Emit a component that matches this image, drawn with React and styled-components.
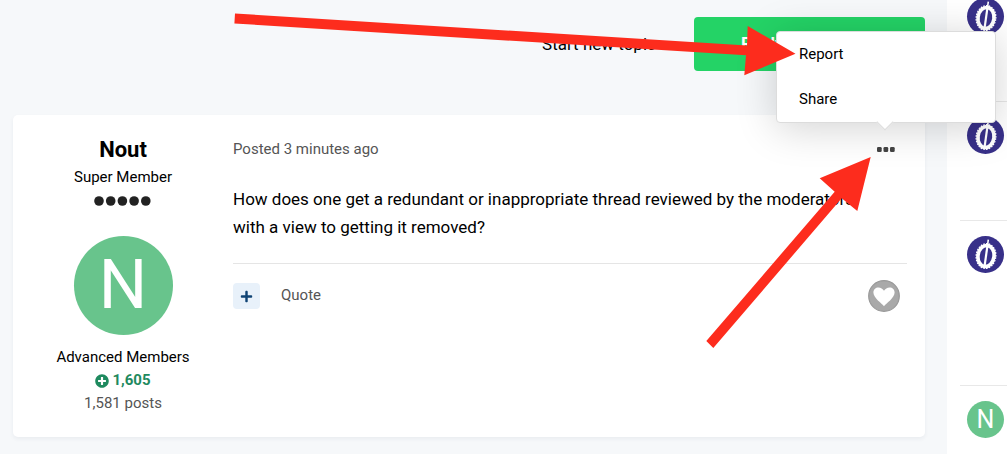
import React from "react"
import styled, { createGlobalStyle } from "styled-components"
import { FaPlus, FaPlusCircle } from "react-icons/fa"

const GlobalStyle = createGlobalStyle`
  * {
    box-sizing: border-box;
  }
  body {
    margin: 0;
    background-color: #f6f8fa;
    color: #000;
    font-family: Roboto, "Liberation Sans", sans-serif;
    font-size: 15px;
    line-height: 23px;
  }
  a {
    color: inherit;
    text-decoration: none;
  }
  button {
    border: 0;
    padding: 0;
    background: none;
    color: inherit;
    font: inherit;
    cursor: pointer;
  }
`

const topics = [
  { id: 1, height: 119 },
  { id: 2, height: 119 },
  { id: 3, height: 165 },
  { id: 4, height: 119, letter: "N" },
]

const Durian = () => (
  <svg width="37" height="37" viewBox="0 0 37 37" aria-hidden="true">
    <g transform="rotate(8 19 20)" fill="none" stroke="#fff">
      <ellipse cx="19" cy="20" rx="8" ry="10.6" strokeWidth="3.6" />
      <ellipse
        cx="19"
        cy="20"
        rx="9.8"
        ry="12.4"
        strokeWidth="1.3"
        strokeDasharray="1.6 1.2"
      />
      <path d="M19 10V30" strokeWidth="2.2" />
      <path d="M19 8V3.4" strokeWidth="1.6" />
    </g>
  </svg>
)

const Rank = () => (
  <svg width="58" height="10" viewBox="0 0 58 10" aria-hidden="true">
    {[5, 16.7, 28.4, 40.1, 51.8].map(x => (
      <circle key={x} cx={x} cy="5" r="4.8" fill="#222" />
    ))}
  </svg>
)

const Dots = () => (
  <svg width="18" height="5" viewBox="0 0 18 5" aria-hidden="true">
    {[0, 6.5, 13].map(x => (
      <rect key={x} x={x} width="4.7" height="5" rx="1.3" fill="#444" />
    ))}
  </svg>
)

const Heart = () => (
  <svg width="32" height="32" viewBox="0 0 32 32" aria-hidden="true">
    <circle cx="16" cy="16" r="15.3" fill="#a9a9a9" stroke="#999" strokeWidth="1.2" />
    <path
      d="M16 26.2C14 23.5 5.4 18.2 5.4 12.6C5.4 9.6 7.7 7.6 10.4 7.6C12.8 7.6 14.8 8.9 16 10.8C17.2 8.9 19.2 7.6 21.6 7.6C24.4 7.6 26.6 9.6 26.6 12.6C26.6 18.2 18 23.5 16 26.2Z"
      fill="#fff"
    />
  </svg>
)

const App = () => {
  return (
    <Page>
      <GlobalStyle />
      <Main>
        <Actions>
          <a href="#new">Start new topic</a>
          <ReplyButton>Reply to this topic</ReplyButton>
        </Actions>
        <Post>
          <Author>
            <AuthorName>Nout</AuthorName>
            <span>Super Member</span>
            <RankRow>
              <Rank />
            </RankRow>
            <Avatar $size={99} $fontSize={68}>
              N
            </Avatar>
            <Group>Advanced Members</Group>
            <Reputation>
              <FaPlusCircle size={14} /> 1,605
            </Reputation>
            <Muted>1,581 posts</Muted>
          </Author>
          <Content>
            <PostHeader>
              <Muted>Posted 3 minutes ago</Muted>
              <MenuAnchor>
                <MoreButton aria-label="More options">
                  <Dots />
                </MoreButton>
                <Menu>
                  <a href="#report">Report</a>
                  <a href="#share">Share</a>
                </Menu>
              </MenuAnchor>
            </PostHeader>
            <Message>
              How does one get a redundant or inappropriate thread reviewed by
              the moderators with a view to getting it removed?
            </Message>
            <PostFooter>
              <MultiQuote aria-label="Multiquote">
                <FaPlus size={13} />
              </MultiQuote>
              <QuoteButton>Quote</QuoteButton>
              <LikeButton aria-label="Like">
                <Heart />
              </LikeButton>
            </PostFooter>
          </Content>
        </Post>
      </Main>
      <Sidebar>
        {topics.map(topic => (
          <Topic key={topic.id} $height={topic.height}>
            <Avatar $size={37} $fontSize={25} $logo={!topic.letter}>
              {topic.letter || <Durian />}
            </Avatar>
          </Topic>
        ))}
      </Sidebar>
      <Arrows viewBox="0 0 1007 454" aria-hidden="true">
        <path d="M235 13.5L747 45.5L747.7 26L795.5 53.7L744.3 75.3L746 55.3L234.4 23.5Z" />
        <path d="M870.7 157L857.3 211L841.7 198.3L713.3 348L706.3 341L834.7 191.7L819.7 178.3Z" />
      </Arrows>
    </Page>
  )
}

const Page = styled.div`
  position: relative;
  display: flex;
  height: 100vh;
  overflow: hidden;
`

const Main = styled.main`
  flex: 1;
  padding: 17px 22px 17px 13px;
`

const Actions = styled.div`
  display: flex;
  justify-content: flex-end;
  align-items: center;
  gap: 38px;
  margin-bottom: 44px;
  font-size: 17px;
`

const ReplyButton = styled.button`
  padding: 15px 47px 16px;
  border-radius: 4px;
  background-color: #24d366;
  color: #fff;
  font-weight: 700;
`

const Post = styled.article`
  display: flex;
  border-radius: 5px;
  background-color: #fff;
  box-shadow: 0 2px 4px rgba(30, 50, 80, 0.06);
`

const Author = styled.aside`
  display: flex;
  flex-direction: column;
  align-items: center;
  width: 220px;
  padding: 21px 0 22px;
`

const AuthorName = styled.h3`
  margin: 0 0 2px;
  font-size: 22px;
  line-height: 28px;
  font-weight: 700;
`

const RankRow = styled.div`
  display: flex;
  margin: 7px 0 30px;
`

const Avatar = styled.div`
  display: flex;
  flex-shrink: 0;
  justify-content: center;
  align-items: center;
  width: ${props => props.$size}px;
  height: ${props => props.$size}px;
  border-radius: 50%;
  background-color: ${props => (props.$logo ? "#383089" : "#68c48c")};
  color: #fff;
  font-size: ${props => props.$fontSize}px;
`

const Group = styled.span`
  margin-top: 11px;
`

const Reputation = styled.span`
  display: flex;
  align-items: center;
  gap: 3px;
  color: #1f8a5f;
  font-weight: 700;
`

const Muted = styled.span`
  color: #555;
`

const Content = styled.div`
  flex: 1;
  padding: 23px 18px 0 0;
`

const PostHeader = styled.header`
  display: flex;
  justify-content: space-between;
`

const MenuAnchor = styled.div`
  position: relative;
  display: flex;
  margin-right: 12px;
`

const MoreButton = styled.button`
  display: flex;
  align-items: center;
`

const Menu = styled.nav`
  position: absolute;
  right: -101px;
  bottom: 38px;
  display: flex;
  flex-direction: column;
  width: 220px;
  border: 1px solid #dcdcdc;
  border-radius: 4px;
  background-color: #fff;
  box-shadow: 0 5px 40px rgba(0, 0, 0, 0.18);

  a {
    padding: 11px 22px;
  }

  &::after {
    content: "";
    position: absolute;
    right: 104px;
    bottom: -6px;
    width: 11px;
    height: 11px;
    border: solid #dcdcdc;
    border-width: 0 1px 1px 0;
    background-color: #fff;
    transform: rotate(45deg);
  }
`

const Message = styled.p`
  margin: 24px 0 22px;
  padding-right: 20px;
  font-size: 17px;
  line-height: 28px;
`

const PostFooter = styled.footer`
  display: flex;
  align-items: center;
  padding: 16px 7px 0 0;
  border-top: 1px solid #e5e5e5;
`

const MultiQuote = styled.button`
  display: flex;
  justify-content: center;
  align-items: center;
  width: 27px;
  height: 26px;
  border-radius: 4px;
  background-color: #e8f1fa;
  color: #0f4374;
`

const QuoteButton = styled.button`
  margin-left: 21px;
  padding-bottom: 2px;
  color: #555;
`

const LikeButton = styled.button`
  display: flex;
  margin-left: auto;
`

const Sidebar = styled.aside`
  width: 60px;
  padding-left: 13px;
  margin-top: -18px;
  background-color: #fff;
`

const Topic = styled.div`
  height: ${props => props.$height}px;
  padding: 15px 7px;
  border-top: 1px solid #e8e8e8;
`

const Arrows = styled.svg`
  position: absolute;
  top: 0;
  left: 0;
  width: 100%;
  fill: #fd2c1d;
  pointer-events: none;
`

export default App
